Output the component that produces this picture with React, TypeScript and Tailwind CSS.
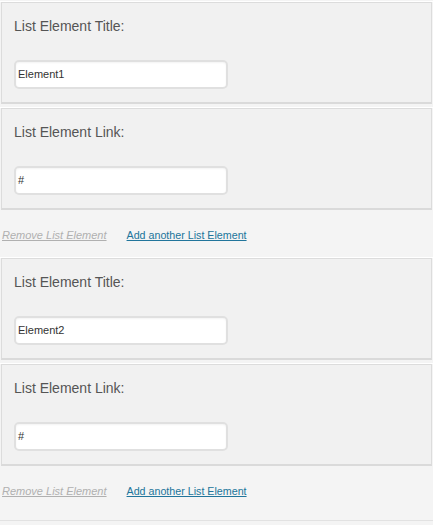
import React from 'react';

const items = [
  { title: 'Element1', link: '#' },
  { title: 'Element2', link: '#' },
];

const Field: React.FC<{ label: string; value: string }> = ({ label, value }) => (
  <div className="mx-[1px] h-[102px] border border-[#dcdcdc] border-b-2 border-b-[#dadada] bg-[#f1f1f1] pl-[12px] pt-[15px]">
    <div className="text-[14px] leading-[16px] text-[#555]">{label}</div>
    <div className="mt-[26px] flex h-[29px] w-[214px] items-center rounded-[5px] border-2 border-[#e0e0e0] bg-white pl-[2px] text-[11px] text-[#333] shadow-[inset_0_1px_2px_rgba(0,0,0,0.05)]">
      {value}
    </div>
  </div>
);

export default function App() {
  return (
    <div className="min-h-[525px] w-[433px] bg-[#f4f4f4] pt-[1px] font-['Liberation_Sans',Arial,sans-serif]">
      {items.map((it, i) => (
        <div key={i}>
          <div className="border-t border-white">
            <Field label="List Element Title:" value={it.title} />
          </div>
          <div className="mt-[3px] border-t border-white">
            <Field label="List Element Link:" value={it.link} />
          </div>
          <div
            className={
              i === items.length - 1
                ? 'flex h-[55px] items-start gap-[20px] border-b border-[#e2e2e2] pl-[2px] pt-[17px] text-[11px]'
                : 'flex h-[47px] items-start gap-[20px] pl-[2px] pt-[17px] text-[11px]'
            }
          >
            <span className="italic text-[#b0b0b0] underline">Remove List Element</span>
            <span className="text-[10.7px] text-[#21759b] underline">Add another List Element</span>
          </div>
        </div>
      ))}
    </div>
  );
}
